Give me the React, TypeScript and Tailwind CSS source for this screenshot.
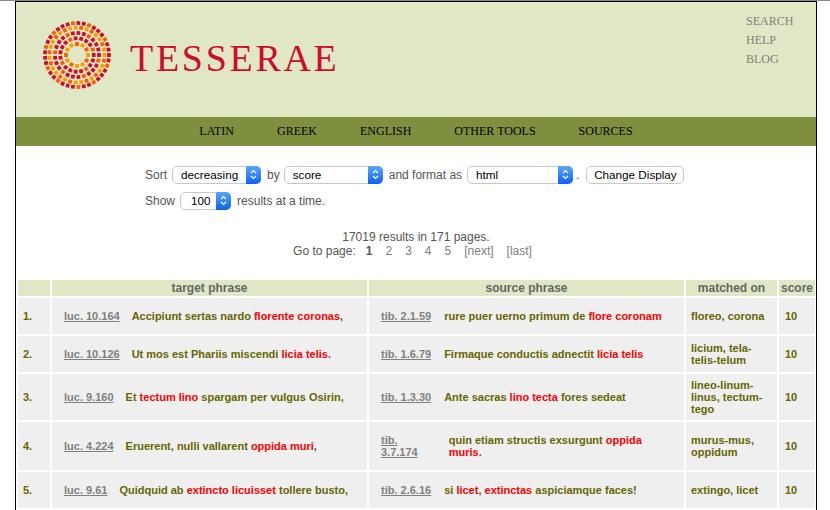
import React from "react";

const SERIF = "font-['Liberation_Serif',serif]";
const SANS = "font-['Liberation_Sans',Arial,sans-serif]";

const RED = "#c8102e";
const ORANGE = "#ff5a00";
const AMBER = "#ff9a00";

// ring tiles for the logo: radius, tile count, colour cycle
const RINGS = [
  { r: 11, n: 12, colors: [AMBER, ORANGE, AMBER, AMBER, ORANGE] },
  { r: 16.7, n: 19, colors: [RED, RED, RED, ORANGE, RED] },
  { r: 22, n: 25, colors: [RED, ORANGE, RED, RED] },
  { r: 27.5, n: 31, colors: [AMBER, ORANGE, AMBER, AMBER, ORANGE] },
  { r: 32, n: 37, colors: [RED, RED, ORANGE, RED, RED, RED, ORANGE] },
];

function Logo() {
  const tiles: React.ReactNode[] = [];
  RINGS.forEach((ring, ri) => {
    for (let i = 0; i < ring.n; i++) {
      const a = (i / ring.n) * Math.PI * 2;
      const cx = 34 + Math.cos(a) * ring.r;
      const cy = 34 + Math.sin(a) * ring.r;
      tiles.push(
        <rect
          key={`${ri}-${i}`}
          x={cx - 1.9}
          y={cy - 1.9}
          width={3.8}
          height={3.8}
          rx={0.5}
          fill={ring.colors[i % ring.colors.length]}
          transform={`rotate(${(a * 180) / Math.PI} ${cx} ${cy})`}
        />
      );
    }
  });
  return (
    <svg width="68" height="68" viewBox="0 0 68 68">
      {tiles}
    </svg>
  );
}

function SelectBox({ value, width, pad = "pl-[8px]" }: { value: string; width: string; pad?: string }) {
  return (
    <span className={`inline-flex items-center justify-between h-[18px] bg-white border border-[#c8c8c8] rounded-[5px] text-[11.7px] text-black ${width}`}>
      <span className={pad}>{value}</span>
      <span className="w-[15px] h-[18px] -mr-px bg-gradient-to-b from-[#5aa5f8] to-[#0a60f0] rounded-r-[5px] flex items-center justify-center">
        <svg width="7" height="11" viewBox="0 0 7 11" fill="none" stroke="white" strokeWidth="1.2">
          <path d="M1 4 L3.5 1.5 L6 4" />
          <path d="M1 7 L3.5 9.5 L6 7" />
        </svg>
      </span>
    </span>
  );
}

const Hi = ({ children }: { children: React.ReactNode }) => <span className="text-[#ff0000]">{children}</span>;

const ROWS = [
  {
    n: "1.", h: "h-[36px]",
    tl: "luc. 10.164",
    t: <>Accipiunt sertas nardo <Hi>florente coronas</Hi>,</>,
    sl: "tib. 2.1.59",
    s: <>rure puer uerno primum de <Hi>flore coronam</Hi></>,
    m: "floreo, corona",
  },
  {
    n: "2.", h: "h-[36px]",
    tl: "luc. 10.126",
    t: <>Ut mos est Phariis miscendi <Hi>licia telis</Hi>.</>,
    sl: "tib. 1.6.79",
    s: <>Firmaque conductis adnectit <Hi>licia telis</Hi></>,
    m: "licium, tela-telis-telum",
  },
  {
    n: "3.", h: "h-[46px]",
    tl: "luc. 9.160",
    t: <>Et <Hi>tectum lino</Hi> spargam per vulgus Osirin,</>,
    sl: "tib. 1.3.30",
    s: <>Ante sacras <Hi>lino tecta</Hi> fores sedeat</>,
    m: "lineo-linum-linus, tectum-tego",
  },
  {
    n: "4.", h: "h-[48px]",
    tl: "luc. 4.224",
    t: <>Eruerent, nulli vallarent <Hi>oppida muri</Hi>,</>,
    sl: <>tib.<br />3.7.174</>,
    s: <>quin etiam structis exsurgunt <Hi>oppida muris</Hi>.</>,
    m: "murus-mus, oppidum",
    sGap: "ml-[31px]",
  },
  {
    n: "5.", h: "h-[36px]",
    tl: "luc. 9.61",
    t: <>Quidquid ab <Hi>extincto licuisset</Hi> tollere busto,</>,
    sl: "tib. 2.6.16",
    s: <>si <Hi>licet</Hi>, <Hi>extinctas</Hi> aspiciamque faces!</>,
    m: "extingo, licet",
  },
];

const COLS = "grid grid-cols-[32px_315px_315px_91px_36px] gap-x-[2px]";

export default function App() {
  return (
    <div className={`w-[830px] h-[510px] overflow-hidden bg-white border-t border-[#8a8a8a] ${SANS}`}>
      <div className="w-[802px] h-[509px] ml-[15px] border-x border-t border-black overflow-hidden">
        <header className="h-[115px] bg-[#e0e7c4] flex justify-between">
          <div className="flex items-start pl-[27px]">
            <span className="mt-[19px] block"><Logo /></span>
            <span className={`${SERIF} mt-[37px] ml-[19px] text-[38px] leading-none tracking-[2.7px] text-[#cf0a2c]`}>TESSERAE</span>
          </div>
          <nav className={`${SERIF} w-[70px] pt-[12px] flex flex-col gap-[5px] text-[12px] leading-[14px] text-[#808080]`}>
            <span>SEARCH</span>
            <span>HELP</span>
            <span>BLOG</span>
          </nav>
        </header>
        <nav className={`${SERIF} h-[29px] pb-[1px] bg-[#7e8f3e] flex items-center justify-center gap-[43px] text-[12px] text-black`}>
          <span>LATIN</span>
          <span>GREEK</span>
          <span>ENGLISH</span>
          <span>OTHER TOOLS</span>
          <span>SOURCES</span>
        </nav>
        <section className="pt-[20px] pl-[129px] text-[12px] text-[#555] flex flex-col gap-[8px]">
          <div className="flex items-center h-[18px]">
            <span>Sort</span>
            <span className="ml-[5px]"><SelectBox value="decreasing" width="w-[89px]" /></span>
            <span className="ml-[6px]">by</span>
            <span className="ml-[4px]"><SelectBox value="score" width="w-[99px]" /></span>
            <span className="ml-[6px]">and format as</span>
            <span className="ml-[5px]"><SelectBox value="html" width="w-[106px]" /></span>
            <span className="ml-[3px]">.</span>
            <span className="ml-[7px] h-[18px] w-[98px] bg-white border border-[#c8c8c8] rounded-[5px] text-[11.7px] text-black flex items-center justify-center">Change Display</span>
          </div>
          <div className="flex items-center h-[18px]">
            <span>Show</span>
            <span className="ml-[5px]"><SelectBox value="100" width="w-[51px]" pad="pl-[10px]" /></span>
            <span className="ml-[6px]">results at a time.</span>
          </div>
        </section>
        <section className="mt-[20px] text-[12px] leading-[14px] text-[#555] text-center">
          <div>17019 results in 171 pages.</div>
          <div className="flex justify-center gap-[13px] pr-[7px]">
            <span className="-mr-[3px]">Go to page:</span>
            <span className="font-bold">1</span>
            <span className="text-[#808080]">2</span>
            <span className="text-[#808080]">3</span>
            <span className="text-[#808080]">4</span>
            <span className="text-[#808080]">5</span>
            <span className="text-[#808080]">[next]</span>
            <span className="text-[#808080]">[last]</span>
          </div>
        </section>
        <section className="mt-[22px] ml-[2px] text-[11px] font-bold">
          <div className={`${COLS} h-[16px] text-[12px] text-[#666] leading-[16px] text-center`}>
            <div className="bg-[#e0e7c4]" />
            <div className="bg-[#e0e7c4]">target phrase</div>
            <div className="bg-[#e0e7c4]">source phrase</div>
            <div className="bg-[#e0e7c4]">matched on</div>
            <div className="bg-[#e0e7c4]">score</div>
          </div>
          {ROWS.map((row) => (
            <div key={row.n} className={`${COLS} ${row.h} mt-[2px] text-[#666600] leading-[12px]`}>
              <div className="bg-[#efefef] flex items-center pl-[5px]">{row.n}</div>
              <div className="bg-[#efefef] flex items-center pl-[12px]">
                <span className="text-[#808080] underline whitespace-nowrap">{row.tl}</span>
                <span className="ml-[12px]">{row.t}</span>
              </div>
              <div className="bg-[#efefef] flex items-center pl-[12px] pr-[19px]">
                <span className="text-[#808080] underline whitespace-nowrap shrink-0">{row.sl}</span>
                <span className={row.sGap ?? "ml-[13px]"}>{row.s}</span>
              </div>
              <div className="bg-[#efefef] flex items-center pl-[5px]">{row.m}</div>
              <div className="bg-[#efefef] flex items-center pl-[6px]">10</div>
            </div>
          ))}
        </section>
      </div>
    </div>
  );
}
